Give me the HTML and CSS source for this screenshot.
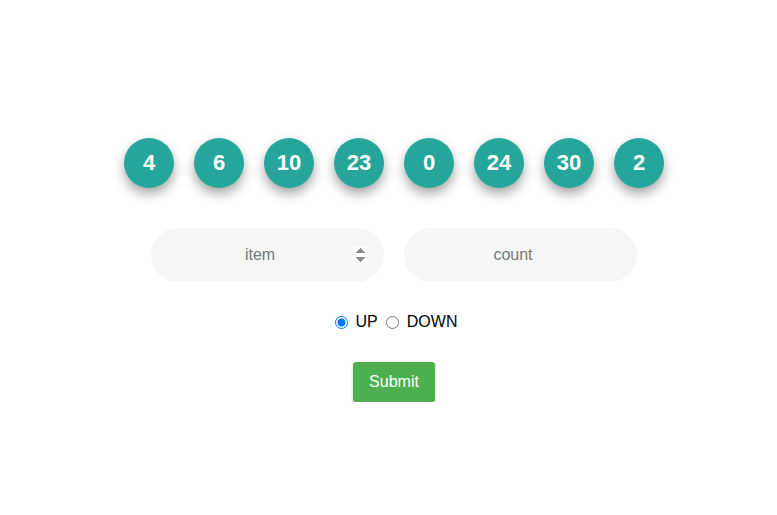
FILE: index.html
```html
<!DOCTYPE html>
<html>
<head>
<meta charset="utf-8">
<link rel="stylesheet" href="styles.css">
</head>
<body>
<div class="app">
  <div class="balls">
    <div class="ball">4</div>
    <div class="ball">6</div>
    <div class="ball">10</div>
    <div class="ball">23</div>
    <div class="ball">0</div>
    <div class="ball">24</div>
    <div class="ball">30</div>
    <div class="ball">2</div>
  </div>
  <form class="form">
    <div class="inputs">
      <input class="field field-hover" type="number" placeholder="item">
      <input class="field" type="number" placeholder="count">
    </div>
    <div class="radios">
      <label class="opt"><input type="radio" name="dir" checked> UP</label>
      <label class="opt"><input type="radio" name="dir"> DOWN</label>
    </div>
    <button class="submit" type="button">Submit</button>
  </form>
</div>
</body>
</html>
```
FILE: styles.css
```css
html, body {
  margin: 0;
  padding: 0;
  background: #fff;
}
body {
  font-family: "Liberation Sans", Arial, sans-serif;
  padding-left: 11px;
}
.app {
  display: flex;
  flex-direction: column;
  align-items: center;
  padding-top: 138px;
}
.balls {
  display: flex;
  gap: 20px;
}
.ball {
  width: 50px;
  height: 50px;
  border-radius: 50%;
  background: #26a69a;
  color: #fff;
  font-weight: bold;
  font-size: 22px;
  display: flex;
  align-items: center;
  justify-content: center;
  box-shadow: 0 6px 12px rgba(0, 0, 0, 0.35);
}
.form {
  display: flex;
  flex-direction: column;
  align-items: center;
  margin-top: 40px;
}
.inputs {
  display: flex;
  gap: 20px;
}
.field {
  width: 233px;
  height: 54px;
  box-sizing: border-box;
  border: none;
  border-radius: 27px;
  background: #f6f6f6;
  font-family: "Liberation Sans", Arial, sans-serif;
  font-size: 16px;
  text-align: center;
  padding: 0 16px;
  outline: none;
  color: #555;
}
.field::placeholder {
  color: #777;
}
.field::-webkit-inner-spin-button {
  opacity: 0;
}
.field-hover::-webkit-inner-spin-button {
  opacity: 1;
}
.radios {
  display: flex;
  gap: 8px;
  margin-top: 31px;
  padding-left: 4px;
  font-size: 16px;
  color: #000;
}
.opt {
  display: flex;
  align-items: center;
  gap: 4px;
}
.opt input {
  margin: 0 4px 0 0;
  width: 13px;
  height: 13px;
}
.submit {
  margin-top: 31px;
  width: 82px;
  height: 40px;
  border: none;
  border-radius: 3px;
  background: #4caf50;
  color: #fff;
  font-family: "Liberation Sans", Arial, sans-serif;
  font-size: 16px;
  box-shadow: 0 2px 3px rgba(0, 0, 0, 0.25);
  cursor: pointer;
}
```
